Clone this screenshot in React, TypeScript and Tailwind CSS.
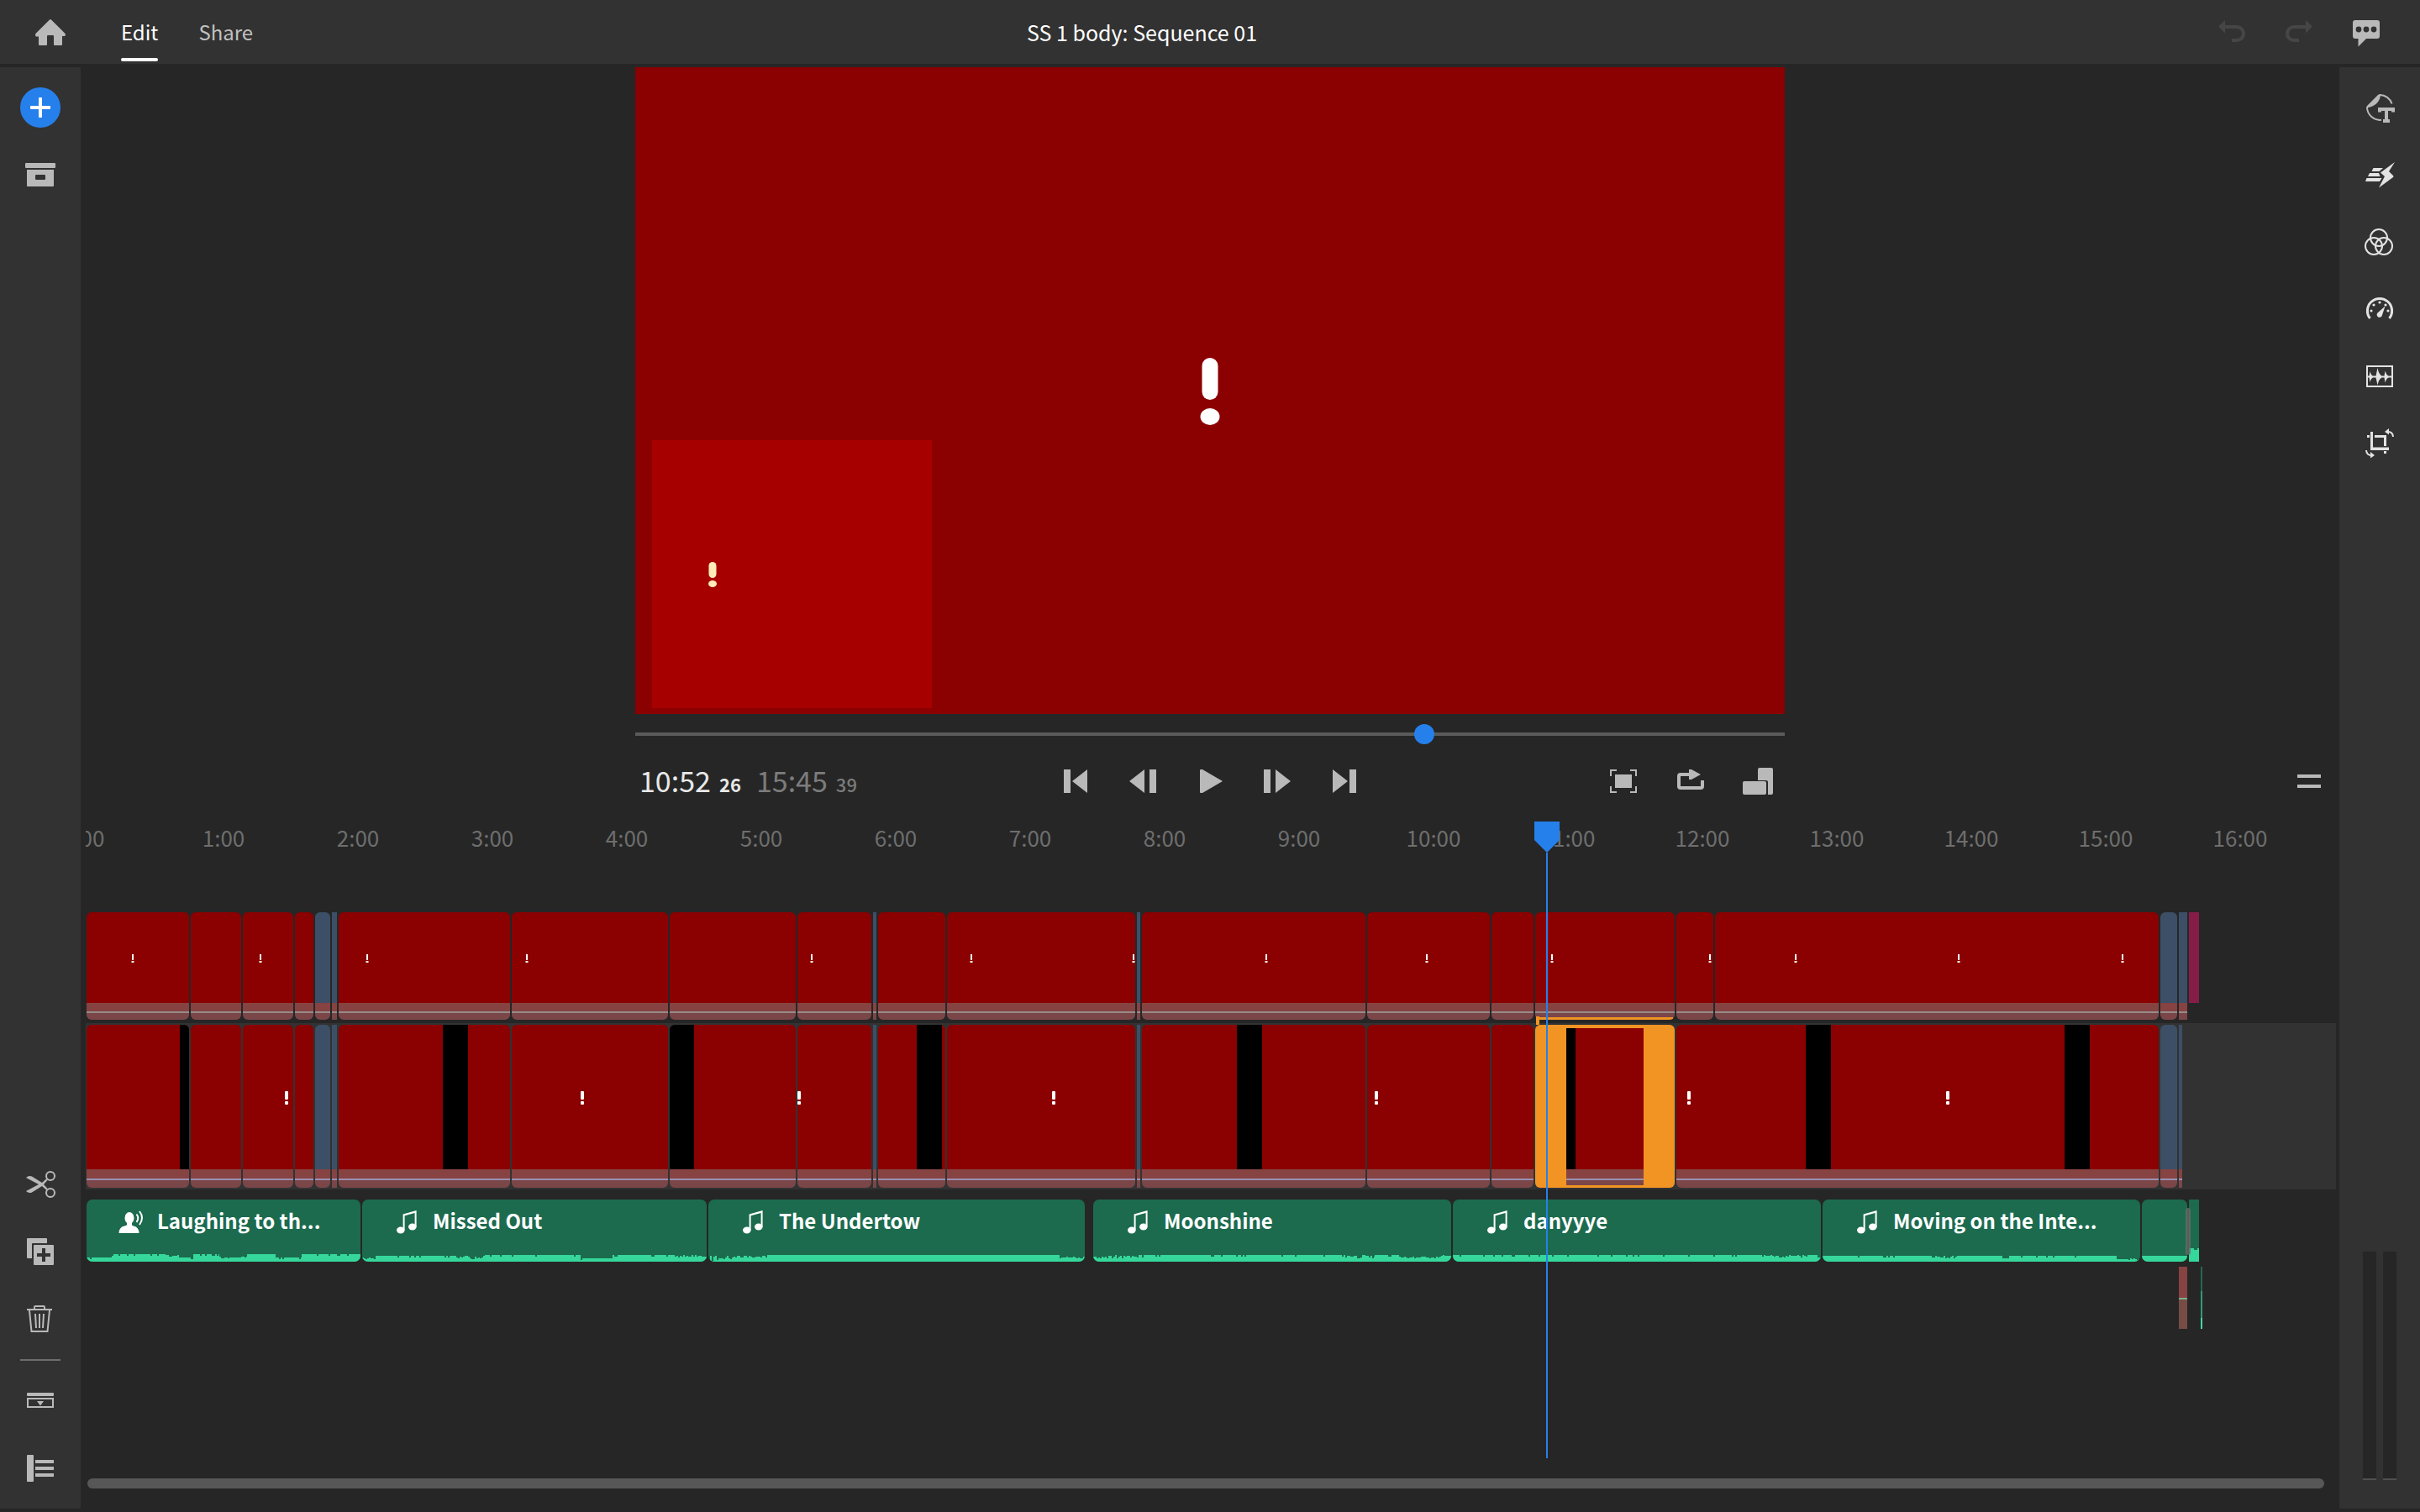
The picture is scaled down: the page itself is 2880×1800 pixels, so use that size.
import type { ReactNode } from "react"

type Mark = number

type ClipData = {
  w: number
  kind?: "blue" | "title"
  square?: boolean
  marks?: Mark[]
  bars?: [number, number][]
  selected?: boolean
  linked?: boolean
}

// widths are in timeline pixels (160px = 1 minute)
const overlayTrack: ClipData[] = [
  { w: 122, marks: [55] },
  { w: 60 },
  { w: 60, marks: [21] },
  { w: 22 },
  { w: 18, kind: "blue" },
  { w: 6, kind: "blue", square: true },
  { w: 204, marks: [34] },
  { w: 186, marks: [18] },
  { w: 150 },
  { w: 88, marks: [17] },
  { w: 4, kind: "blue", square: true },
  { w: 80 },
  { w: 224, marks: [29, 222] },
  { w: 4, kind: "blue", square: true },
  { w: 266, marks: [148] },
  { w: 146, marks: [71] },
  { w: 50 },
  { w: 166, marks: [20], linked: true },
  { w: 44, marks: [40] },
  { w: 528, marks: [96, 290, 485] },
  { w: 20, kind: "blue" },
  { w: 10, kind: "blue", square: true },
  { w: 12, kind: "title", square: true },
]

const mainTrack: ClipData[] = [
  { w: 122, bars: [[111, 11]] },
  { w: 60 },
  { w: 60, marks: [52] },
  { w: 22 },
  { w: 18, kind: "blue" },
  { w: 6, kind: "blue", square: true },
  { w: 204, bars: [[124, 30]] },
  { w: 186, marks: [84] },
  { w: 150, bars: [[0, 29]] },
  { w: 88, marks: [2] },
  { w: 4, kind: "blue", square: true },
  { w: 80, bars: [[46, 30]] },
  { w: 224, marks: [127] },
  { w: 4, kind: "blue", square: true },
  { w: 266, bars: [[113, 30]] },
  { w: 146, marks: [11] },
  { w: 50 },
  { w: 166, bars: [[37, 11]], selected: true },
  { w: 574, marks: [15, 323], bars: [[154, 30], [462, 30]] },
  { w: 20, kind: "blue" },
  { w: 4, kind: "blue", square: true },
]

// [from, to, height, jitter]
type Wave = [number, number, number, number][]

type AudioData = {
  w: number
  title?: string
  voice?: boolean
  square?: boolean
  gapBefore?: boolean
  wave: Wave
}

const audioTrack: AudioData[] = [
  {
    w: 326,
    title: "Laughing to th...",
    voice: true,
    wave: [[0, 30, 5, 1], [30, 94, 9, 1], [94, 110, 8, 3], [110, 127, 5, 1], [127, 158, 9, 1], [158, 191, 6, 2], [191, 225, 9, 1], [225, 256, 5, 1], [256, 326, 9, 1]],
  },
  {
    w: 410,
    title: "Missed Out",
    wave: [[0, 16, 5, 2], [16, 114, 7, 1], [114, 146, 7, 4], [146, 260, 8, 1], [260, 298, 4, 1], [298, 372, 8, 1], [372, 410, 8, 3]],
  },
  { w: 448, title: "The Undertow", wave: [[0, 30, 8, 7], [30, 70, 8, 3], [70, 418, 8, 0], [418, 448, 6, 2]] },
  {
    w: 426,
    gapBefore: true,
    title: "Moonshine",
    wave: [[0, 18, 6, 2], [18, 60, 8, 4], [60, 300, 8, 1], [300, 335, 8, 4], [335, 364, 8, 1], [364, 412, 6, 2], [412, 426, 8, 3]],
  },
  { w: 438, title: "danyyye", wave: [[0, 366, 8, 1], [366, 438, 8, 3]] },
  { w: 378, title: "Moving on the Inte...", wave: [[0, 130, 7, 1], [130, 160, 7, 4], [160, 214, 7, 0], [214, 222, 4, 1], [222, 350, 7, 1], [350, 378, 4, 2]] },
  { w: 54, wave: [[0, 54, 7, 0]] },
  { w: 12, square: true, wave: [[0, 12, 16, 1]] },
]

const minutes = Array.from({ length: 17 }, (_, i) => (i === 0 ? "00" : `${i}:00`))

const wavePath = (wave: Wave) => {
  let d = "M0 16"
  wave.forEach(([from, to, height, jitter]) => {
    for (let x = from; x < to; x += 2) {
      const r = Math.abs(Math.sin(x * 12.9898 + to) * 43758.5453) % 1
      const drop = jitter > 1 ? Math.round(r * jitter) : r > 0.9 ? jitter * 2 : 0
      d += `V${16 - height + drop}H${Math.min(x + 2, to)}`
    }
  })
  return d + "V16Z"
}

const Icon = ({ children, className = "" }: { children: ReactNode; className?: string }) => (
  <svg viewBox="0 0 48 48" className={`size-12 ${className}`} fill="currentColor" aria-hidden="true">
    {children}
  </svg>
)

const IconButton = ({ label, className = "", children }: { label: string; className?: string; children: ReactNode }) => (
  <button type="button" aria-label={label} className={`size-12 shrink-0 ${className}`}>
    <Icon>{children}</Icon>
  </button>
)

const TopBar = () => (
  <header className="grid h-[76px] grid-cols-[1fr_auto_1fr] items-center bg-[#323232] pl-9 pr-10 text-[24px] leading-[36px]">
    <div className="flex h-full items-center">
      <IconButton label="Home" className="text-[#b9b9b9]">
        <path d="M23 9.500q1-1 2 0L41.600 26q1 1.500-.4 3H38v10q0 1-1 1h-8q-1 0-1-1V29q0-1-1-1h-6q-1 0-1 1v10q0 1-1 1h-8q-1 0-1-1V29.500H6.800q-1.400-1.500-.4-3.500z" />
      </IconButton>
      <nav className="ml-[60px] flex h-full gap-12">
        <a href="#edit" aria-current="page" className="flex h-full flex-col justify-between pb-[3px] pt-5 text-white">
          Edit
          <span className="h-1 rounded-full bg-white" />
        </a>
        <a href="#share" className="pt-5 text-[#c0c0c0]">
          Share
        </a>
      </nav>
    </div>
    <h1 className="mr-[158px] text-[25px] text-white">SS 1 body: Sequence 01</h1>
    <div className="flex justify-end gap-8">
      <IconButton label="Undo" className="text-[#464646]">
        <path d="M8 17.500 16 10v15.500z" />
        <path d="M15 18h15a8 8 0 0 1 0 16h-6" fill="none" stroke="currentColor" strokeWidth="4" />
      </IconButton>
      <IconButton label="Redo" className="text-[#464646]">
        <path d="M40 17.500 32 10v15.500z" />
        <path d="M33 18H18a8 8 0 0 0 0 16h6" fill="none" stroke="currentColor" strokeWidth="4" />
      </IconButton>
      <IconButton label="Comments" className="text-[#b9b9b9]">
        <path d="M11 10h26q3 0 3 3v16q0 3-3 3H24l-9.500 9.500V32H11q-3 0-3-3V13q0-3 3-3z" />
        <g fill="#323232">
          <circle cx="15" cy="21" r="3.400" />
          <circle cx="24" cy="21" r="3.400" />
          <circle cx="33" cy="21" r="3.400" />
        </g>
      </IconButton>
    </div>
  </header>
)

const LeftBar = () => (
  <aside className="flex w-24 shrink-0 flex-col items-center justify-between bg-[#323232] py-6 text-[#b9b9b9]">
    <div className="flex flex-col gap-8">
      <IconButton label="Add media" className="rounded-full bg-[#2680eb] text-white">
        <rect x="12" y="22" width="24" height="4" rx="1" />
        <rect x="22" y="12" width="4" height="24" rx="1" />
      </IconButton>
      <IconButton label="Project assets">
        <rect x="6" y="10" width="36" height="6" rx="1" />
        <path d="M8 18h32v19q0 1-1 1H9q-1 0-1-1zm11 6q-1 0-1 1v4q0 1 1 1h10q1 0 1-1v-4q0-1-1-1z" fillRule="evenodd" />
      </IconButton>
    </div>
    <div className="flex flex-col items-center gap-6">
      <div className="flex flex-col gap-8">
        <IconButton label="Split">
          <g fill="none" stroke="currentColor" strokeWidth="2">
            <circle cx="36" cy="14" r="5" />
            <circle cx="36" cy="34" r="5" />
          </g>
          <path d="M7 16q3-3 7-1.500L26 22l5.500-5 1 2-4.500 5 4.500 5-1 2-5.500-5-12 7.500Q10 35 7 32l15-8z" />
        </IconButton>
        <IconButton label="Duplicate">
          <path d="M9 8h22q1 0 1 1v5H15q-1 0-1 1v17H9q-1 0-1-1V9q0-1 1-1z" />
          <path d="M17 16h22q1 0 1 1v22q0 1-1 1H17q-1 0-1-1V17q0-1 1-1zm9 4v6h-6v4h6v6h4v-6h6v-4h-6v-6z" fillRule="evenodd" />
        </IconButton>
        <IconButton label="Delete">
          <g fill="none" stroke="currentColor" strokeWidth="2">
            <path d="M8 13h30M17 12V10q0-1 1-1h10q1 0 1 1v2M11 14l2.500 25h19L35 14M18 18l1 17M23 18v17M28 18l-1 17" />
          </g>
        </IconButton>
      </div>
      <hr className="w-12 border-t-2 border-[#6e6e6e]" />
      <div className="flex flex-col gap-8">
        <IconButton label="Expand all tracks">
          <rect x="8" y="14" width="32" height="4" rx="1" />
          <rect x="9" y="21" width="30" height="10" fill="none" stroke="currentColor" strokeWidth="2" />
          <path d="M20 24h8l-4 5.500z" />
        </IconButton>
        <IconButton label="Track controls">
          <rect x="8" y="8" width="8" height="32" rx="1" />
          <path d="M18 14h22v4H18zM18 22h22v4H18zM18 30h22v4H18z" />
        </IconButton>
      </div>
    </div>
  </aside>
)

const RightBar = () => (
  <aside className="flex w-24 shrink-0 flex-col items-center justify-between bg-[#323232] pb-[34px] pt-6 text-[#e3e3e3]">
    <div className="flex flex-col gap-8">
      <IconButton label="Graphics" className="text-[#b9b9b9]">
        <path d="M8 24.500Q8 23 9 22L22 9q1-1 3-1 0 7-5 11.500-4.500 4-12 5z" />
        <path d="M24 9a15 15 0 0 1 14.500 10.500M9 24a15.500 15.500 0 0 0 17 14.800" fill="none" stroke="currentColor" strokeWidth="2" />
        <path d="M22 24h20v5.500h-4V28h-4v10h2v4h-8v-4h2V28h-4v1.500h-4z" />
      </IconButton>
      <IconButton label="Transitions">
        <path d="M42 9 25 21.500 30 26l-7 13.500L40 27q1-1 0-2l-5-5z" />
        <path d="M16.500 16H28l-4.500 4H14.500zM12 22h11l1.500 4H10zM8.500 28h18L24 32H7z" />
      </IconButton>
      <IconButton label="Color">
        <g fill="none" stroke="currentColor" strokeWidth="2">
          <circle cx="23" cy="19" r="10" />
          <circle cx="17" cy="29" r="10" />
          <circle cx="29" cy="29" r="10" />
        </g>
      </IconButton>
      <IconButton label="Speed">
        <path d="M12.500 35a14.600 14.600 0 1 1 23 0" fill="none" stroke="currentColor" strokeWidth="3" />
        <circle cx="14" cy="26" r="1.600" />
        <circle cx="17" cy="19" r="1.600" />
        <circle cx="24" cy="16" r="1.600" />
        <circle cx="31" cy="19" r="1.600" />
        <circle cx="34" cy="26" r="1.600" />
        <path d="M30.500 20.500 27 31a3.200 3.200 0 1 1-5-3z" />
      </IconButton>
      <IconButton label="Audio">
        <rect x="9" y="12" width="30" height="24" fill="none" stroke="currentColor" strokeWidth="2" />
        <path d="M9 23.500h2.500l1-5.500q1 4.500 3.500 5.500h3.500L21.500 14q1.500 8 5 9.500h3l1-6q1.500 5 4 6H39v2h-4.500q-2.500 1-4 6l-1-6h-3q-3.500 1.500-5 9l-2-9H16q-2.500 1-3.500 5.500l-1-5.500H9z" />
      </IconButton>
      <IconButton label="Transform">
        <path d="M13 10h3v18.500h19V32H13zM9 14h3v3H9zM18 14h14v13h-3V17H18zM29 33h3v3h-3z" />
        <path d="M30 10l5-4v7.500z M18 38l-5-4v7.500z" />
        <path d="M34 10q5.500 0 6 6M14 38q-5.500 0-6-6" fill="none" stroke="currentColor" strokeWidth="2" />
      </IconButton>
    </div>
    <div className="flex gap-2">
      <div className="h-[272px] w-4 border-b-2 border-[#505050] bg-[#262626]" />
      <div className="h-[272px] w-4 border-b-2 border-[#505050] bg-[#262626]" />
    </div>
  </aside>
)

const Preview = () => (
  <div className="relative aspect-video w-full bg-[#8b0000]">
    <svg viewBox="0 0 24 80" className="absolute left-1/2 top-[45%] h-20 w-6 -translate-x-1/2" fill="white" aria-hidden="true">
      <rect x="2.500" y="0" width="19" height="50" rx="9.500" />
      <ellipse cx="12" cy="70" rx="11.500" ry="10" />
    </svg>
    <div className="absolute bottom-[7px] left-5 h-[319px] w-[333px] bg-[#a70000]">
      <svg viewBox="0 0 10 30" className="absolute left-[67px] top-[145px] h-[30px] w-[10px]" fill="#ffecb8" aria-hidden="true">
        <rect x="0.500" y="0" width="9" height="19" rx="4.500" />
        <ellipse cx="5" cy="26" rx="5" ry="4" />
      </svg>
    </div>
  </div>
)

const Transport = () => (
  <div className="grid h-16 grid-cols-[1fr_auto_1fr] items-center px-2 text-[#b9b9b9]">
    <div className="-ml-[3px] flex items-baseline pt-[2px] text-[34px] leading-[48px]">
      <span className="text-[#e8e8e8]">10:52</span>
      <span className="ml-[10px] text-[22px] font-bold text-[#e8e8e8]">26</span>
      <span className="ml-[18px] text-[#7c7c7c]">15:45</span>
      <span className="ml-[10px] text-[22px] font-medium text-[#7c7c7c]">39</span>
    </div>
    <div className="flex gap-8">
      <IconButton label="Go to start">
        <path d="M10 10h8v28h-8zM38 10v28L20 24z" />
      </IconButton>
      <IconButton label="Step back">
        <path d="M26 10v28L8 24zM32 10h8v28h-8z" />
      </IconButton>
      <IconButton label="Play">
        <path d="M12 11q0-1 1-1h2l24 14-24 14h-2q-1 0-1-1z" />
      </IconButton>
      <IconButton label="Step forward">
        <path d="M22 10v28l18-14zM8 10h8v28H8z" />
      </IconButton>
      <IconButton label="Go to end">
        <path d="M10 10v28l18-14zM30 10h8v28h-8z" />
      </IconButton>
    </div>
    <div className="flex justify-end gap-8">
      <IconButton label="Full screen">
        <rect x="14" y="16" width="20" height="16" />
        <path d="M9 18v-7h7M32 11h7v7M39 30v7h-7M16 37H9v-7" fill="none" stroke="currentColor" strokeWidth="2" />
      </IconButton>
      <IconButton label="Loop">
        <path d="M24 16H12q-2 0-2 2v12q0 2 2 2h24q2 0 2-2v-7" fill="none" stroke="currentColor" strokeWidth="4" />
        <path d="M22 10h3l11 6-11 6h-3z" />
      </IconButton>
      <IconButton label="Playback quality">
        <path d="M26 8h14q2 0 2 2v28q0 2-2 2h-4V25q0-2-2-2H24V10q0-2 2-2z" />
        <rect x="6" y="24" width="28" height="16" rx="2" />
      </IconButton>
    </div>
  </div>
)

const Clip = ({ clip, main }: { clip: ClipData; main?: boolean }) => {
  const fill = clip.kind === "blue" ? "bg-[#3c4f66]" : clip.kind === "title" ? "bg-[#861d49]" : "bg-[#8b0000]"
  return (
    <div className={`relative shrink-0 overflow-hidden ${clip.square ? "" : "rounded-[6px]"}`} style={{ width: clip.w }}>
      <div className={`${main ? "h-[172px]" : "h-[108px]"} ${fill}`} />
      {clip.bars?.map(([x, w]) => (
        <div key={x} className="absolute top-0 h-[172px] bg-black" style={{ left: x, width: w }} />
      ))}
      {clip.kind !== "title" && (
        <div className={`flex flex-col ${main ? "h-[22px]" : "h-5"}`}>
          <div className={`bg-[#864342] ${main ? "h-[11px]" : "h-[10px]"}`} />
          <div className={`h-[2px] ${main ? "bg-[#9a90b0]" : "bg-[#968c88]"}`} />
          <div className="flex-1 bg-[#7a4648]" />
        </div>
      )}
      {clip.marks?.map((x) =>
        main ? (
          <svg key={x} viewBox="0 0 4 16" className="absolute top-[79px] h-4 w-1 -translate-x-1/2" style={{ left: x }} fill="white" aria-hidden="true">
            <rect width="4" height="10" rx="1" />
            <rect y="12" width="4" height="4" rx="1" />
          </svg>
        ) : (
          <svg key={x} viewBox="0 0 4 10" className="absolute top-[50px] h-[10px] w-1 -translate-x-1/2" style={{ left: x }} fill="white" aria-hidden="true">
            <rect x="1" width="2" height="7" />
            <rect x="0.500" y="8" width="3" height="2" />
          </svg>
        )
      )}
      {clip.linked && <div className="absolute inset-x-[2px] bottom-0 h-[3px] bg-[#f29423]" />}
      {clip.selected && <div className="absolute inset-0 border-x-[37px] border-b-[3px] border-t-4 border-[#f29423]" />}
    </div>
  )
}

const MusicIcon = () => (
  <svg viewBox="0 0 24 28" className="h-7 w-6" fill="currentColor" aria-hidden="true">
    <ellipse cx="4.800" cy="23.500" rx="4.800" ry="4" />
    <ellipse cx="18.800" cy="19.500" rx="4.800" ry="4" />
    <path d="M7.600 4.500 23.600 0v19.500h-2V3L9.600 6.200v17h-2z" />
  </svg>
)

const VoiceIcon = () => (
  <svg viewBox="0 0 30 28" className="h-7 w-[30px]" fill="currentColor" aria-hidden="true">
    <ellipse cx="13" cy="9" rx="5.500" ry="7" />
    <path d="M10 13h6v4q0 1 2 1.500 6.500 1.500 6.500 8.500h-24q0-7 6.500-8.500 3-.5 3-1.500z" />
    <path d="M21.500 4.500q3.500 4.500 0 9.500M25 1q6 7.500 0 16" fill="none" stroke="currentColor" strokeWidth="2" />
  </svg>
)

const AudioClip = ({ clip }: { clip: AudioData }) => (
  <div
    className={`flex h-[74px] shrink-0 flex-col justify-between overflow-hidden bg-[#1c6b4f] ${clip.square ? "" : "rounded-[7px]"} ${clip.gapBefore ? "ml-2" : ""}`}
    style={{ width: clip.w }}
  >
    {clip.title ? (
      <div className="flex items-start gap-4 pl-[38px] pt-[7px] text-[24px] font-bold leading-[36px] text-white">
        <span className="flex h-10 w-[30px] items-center justify-center">{clip.voice ? <VoiceIcon /> : <MusicIcon />}</span>
        <span className="whitespace-nowrap">{clip.title}</span>
      </div>
    ) : (
      <span />
    )}
    <svg width={clip.w} height="16" viewBox={`0 0 ${clip.w} 16`} className="shrink-0" fill="#35d79a" aria-hidden="true">
      <path d={wavePath(clip.wave)} />
    </svg>
  </div>
)

const Timeline = () => (
  <section className="relative ml-[6px] mr-1 flex flex-1 flex-col overflow-hidden">
    <div className="ml-[-68px] flex h-[124px] pt-[17px] text-[26px] leading-[36px] text-[#6e6e6e]">
      {minutes.map((m) => (
        <span key={m} className="w-[160px] shrink-0 text-center first:w-[152px]">
          {m}
        </span>
      ))}
    </div>
    <div className="flex h-[132px] items-start gap-[2px] pl-px">
      {overlayTrack.map((clip, i) => (
        <Clip key={i} clip={clip} />
      ))}
    </div>
    <div className="flex h-[198px] gap-[2px] bg-[#323232] py-[2px] pl-px">
      {mainTrack.map((clip, i) => (
        <Clip key={i} clip={clip} main />
      ))}
    </div>
    <div className="flex gap-[2px] pl-px pt-3">
      {audioTrack.map((clip, i) => (
        <AudioClip key={i} clip={clip} />
      ))}
    </div>
    <div className="flex gap-4 pl-[2491px] pt-[6px]">
      <div className="flex h-[74px] w-[10px] shrink-0 flex-col">
        <div className="h-[37px] bg-[#864342]" />
        <div className="h-[2px] bg-[#78b088]" />
        <div className="flex-1 bg-[#764c45]" />
      </div>
      <div className="flex h-[74px] w-[2px] shrink-0 flex-col">
        <div className="h-[29px] bg-[#25684c]" />
        <div className="h-8 bg-[#339a72]" />
        <div className="flex-1 bg-[#45d7a0]" />
      </div>
    </div>
    {/* link marker, fade handle and playhead */}
    <div className="absolute left-[1726px] top-[248px] h-[10px] w-1 bg-[#f29423]" />
    <div className="absolute left-[2499px] top-[476px] h-14 w-[6px] rounded-sm bg-[#666b68]/80" />
    <div className="absolute bottom-6 left-[1724px] top-4 flex w-[30px] flex-col items-center">
      <svg viewBox="0 0 30 37" className="h-[37px] w-[30px] shrink-0" fill="#2680eb" aria-hidden="true">
        <path d="M0 0h30v22L15 37 0 22z" />
      </svg>
      <div className="w-[2px] flex-1 bg-[#2680eb]" />
    </div>
  </section>
)

const App = () => {
  return (
    <div className="flex min-h-screen flex-col gap-1 bg-[#262626] pb-1 font-['Noto_Sans_CJK_SC','Noto_Sans',sans-serif]">
      <TopBar />
      <div className="flex flex-1">
        <LeftBar />
        <main className="flex min-w-0 flex-1 flex-col">
          <div className="grid grid-cols-[1fr_minmax(0,1368px)_1fr] items-end">
            <div className="col-start-2">
              <Preview />
              <div className="flex h-12 items-center">
                <input
                  type="range"
                  aria-label="Playback position"
                  min={0}
                  max={945}
                  defaultValue={652}
                  className="h-6 w-full appearance-none bg-transparent [&::-webkit-slider-runnable-track]:h-1 [&::-webkit-slider-runnable-track]:bg-[#5a5a5a] [&::-webkit-slider-thumb]:-mt-[10px] [&::-webkit-slider-thumb]:size-6 [&::-webkit-slider-thumb]:appearance-none [&::-webkit-slider-thumb]:rounded-full [&::-webkit-slider-thumb]:bg-[#2680eb]"
                />
              </div>
              <Transport />
            </div>
            <div className="flex h-16 items-center justify-end pr-3 text-[#b9b9b9]">
              <IconButton label="Timeline menu">
                <path d="M10 16h28v4H10zM10 28h28v4H10z" />
              </IconButton>
            </div>
          </div>
          <Timeline />
          <div className="mb-6 ml-2 mr-[18px] h-3 rounded-full bg-[#575757]" />
        </main>
        <RightBar />
      </div>
    </div>
  )
}

export default App
